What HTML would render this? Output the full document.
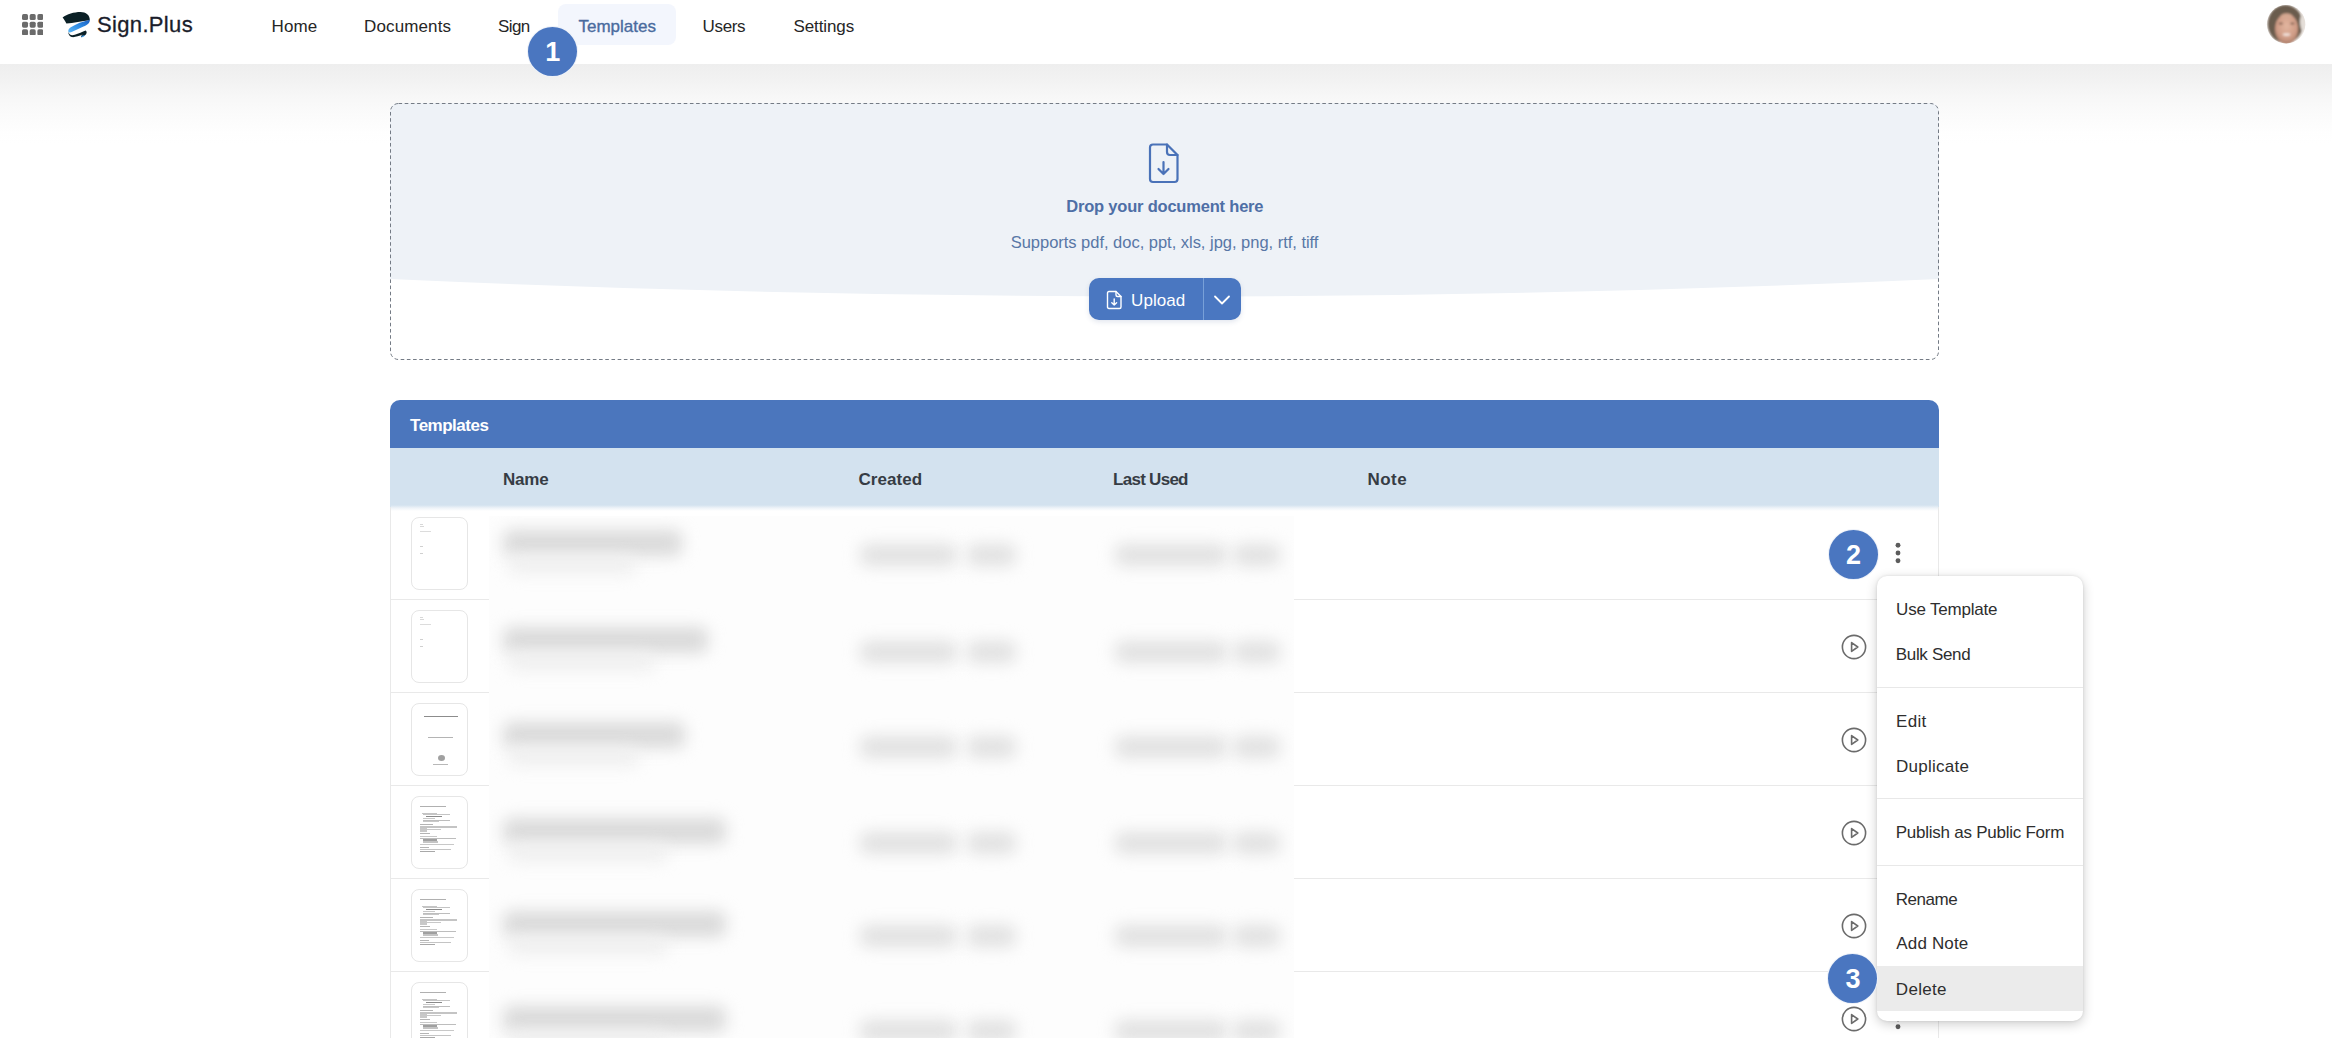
<!DOCTYPE html>
<html><head><meta charset="utf-8"><title>Sign.Plus Templates</title>
<style>*{box-sizing:border-box;margin:0;padding:0}
html,body{width:2332px;height:1038px;overflow:hidden;background:#fff;font-family:"Liberation Sans",sans-serif;color:#333}
.abs{position:absolute}
.tx{position:absolute;white-space:nowrap;line-height:24px}
.badge{position:absolute;border-radius:50%;background:#4a76c0;color:#fff;font-weight:bold;font-size:27px;text-align:center;border:1px solid rgba(255,255,255,0.9)}
.thumb{position:absolute;width:57px;height:73px;border:1px solid #e6e6e6;border-radius:8px;background:#fff;overflow:hidden}
.tl{position:absolute;background:#dadada}
.bl{position:absolute;filter:blur(7px);border-radius:8px}
.sep{position:absolute;left:0;width:206px;height:1px;background:#e8e8e8}
</style></head><body>
<div class="abs" style="left:0;top:0;width:2332px;height:64px;background:#fff"></div>
<div class="abs" style="left:0;top:64px;width:2332px;height:80px;background:linear-gradient(#eeeeee,#f2f2f2 20%,#f7f7f7 40%,#fbfbfb 62%,#fefefe 85%,#fff)"></div>
<svg class="abs" style="left:21.6px;top:14px" width="21.4" height="21.4" viewBox="0 0 22 22" fill="#6b6b6b">
<rect x="0" y="0" width="6.2" height="6.2" rx="1.7"/><rect x="7.9" y="0" width="6.2" height="6.2" rx="1.7"/><rect x="15.8" y="0" width="6.2" height="6.2" rx="1.7"/>
<rect x="0" y="7.9" width="6.2" height="6.2" rx="1.7"/><rect x="7.9" y="7.9" width="6.2" height="6.2" rx="1.7"/><rect x="15.8" y="7.9" width="6.2" height="6.2" rx="1.7"/>
<rect x="0" y="15.8" width="6.2" height="6.2" rx="1.7"/><rect x="7.9" y="15.8" width="6.2" height="6.2" rx="1.7"/><rect x="15.8" y="15.8" width="6.2" height="6.2" rx="1.7"/>
</svg>
<svg class="abs" style="left:62px;top:11px" width="30" height="28" viewBox="0 0 30 28">
<defs><linearGradient id="lg" x1="0" y1="1" x2="1" y2="0"><stop offset="0" stop-color="#5cb6f5"/><stop offset="0.5" stop-color="#2f8de6"/><stop offset="1" stop-color="#1c5fc0"/></linearGradient></defs>
<path d="M0.6 6.6 C5 3.3 12 1.1 18.5 1.1 C24 1.2 27.9 4 27.8 9.2 C20.5 10 11 11.8 4.4 12.6 C3.2 10.2 1.9 8.1 0.6 6.6 Z" fill="#0b2026"/>
<path d="M27.8 8.8 C27.9 12.3 25.5 14 21.5 15.6 L10.2 20.8 C8 21.8 6.6 21.6 6.3 20.4 C6.2 18.8 6.8 17.6 8.8 16.3 C14 13 21 10.4 27.8 8.8 Z" fill="url(#lg)"/>
<path d="M6.3 20.4 C6.8 23.6 9.2 24.8 12.8 23.8 C16.5 22.6 20.5 20.6 23.6 19.4 C25.3 20.4 25 22.8 22.8 24.4 L19.2 26.2 C18.6 25.2 19.5 24.6 20.5 23.6 C17 25 12.5 26.6 9.6 26 C7.4 25.3 6.2 23.2 6.3 20.4 Z" fill="#0b2026"/>
<path d="M19.2 26.2 C19.5 25 20.5 24.2 22.8 24.4 C22 25.5 20.5 26.2 19.2 26.2Z" fill="#3a9ae8"/>
</svg>
<div class="abs" style="left:558px;top:4px;width:118px;height:41px;border-radius:8px;background:#f3f6fd"></div>
<svg class="abs" style="left:2266px;top:4px" width="40" height="40" viewBox="0 0 40 40">
<defs><clipPath id="av"><circle cx="20.1" cy="20.3" r="19.2"/></clipPath>
<filter id="avb" x="-20%" y="-20%" width="140%" height="140%"><feGaussianBlur stdDeviation="0.9"/></filter>
<radialGradient id="skin" cx="0.5" cy="0.4" r="0.6"><stop offset="0" stop-color="#e2b59f"/><stop offset="0.7" stop-color="#cf9c86"/><stop offset="1" stop-color="#a87a66"/></radialGradient></defs>
<g clip-path="url(#av)"><rect width="40" height="40" fill="#efeae6"/>
<g filter="url(#avb)">
<ellipse cx="19.3" cy="20" rx="17.5" ry="19" fill="#6a5c4d"/>
<ellipse cx="37" cy="18" rx="3" ry="9" fill="#e4ded8"/>
<ellipse cx="20.6" cy="25" rx="11.6" ry="15.2" fill="url(#skin)"/>
<ellipse cx="14.8" cy="19.6" rx="2.3" ry="1.1" fill="#8a6656"/>
<ellipse cx="26.4" cy="19.6" rx="2.3" ry="1.1" fill="#8a6656"/>
<ellipse cx="20.5" cy="30.6" rx="3.9" ry="1.4" fill="#f2e2db"/>
<ellipse cx="20.5" cy="12" rx="6" ry="3" fill="#d6ab95" opacity="0.6"/>
</g></g></svg>

<svg class="abs" style="left:390px;top:103px" width="1549" height="257" viewBox="0 0 1549 257">
<defs><clipPath id="dz"><rect x="0" y="0" width="1549" height="257" rx="8.5"/></clipPath></defs>
<g clip-path="url(#dz)"><rect width="1549" height="257" fill="#fff"/><path d="M0 0 H1549 V176 Q774.5 211 0 176 Z" fill="#eef2f7"/></g>
<rect x="0.5" y="0.5" width="1548" height="256" rx="8" fill="none" stroke="#747b85" stroke-width="1" stroke-dasharray="3.6 2.6"/>
</svg>
<svg class="abs" style="left:1148px;top:142px" width="32" height="42" viewBox="0 0 32 42" fill="none" stroke="#4a72b8" stroke-width="2.2" stroke-linejoin="round" stroke-linecap="round">
<path d="M5 2.5 H19 L29.5 13 V37 Q29.5 40 26.5 40 H5 Q2 40 2 37 V5.5 Q2 2.5 5 2.5 Z"/><path d="M19 2.5 V10 Q19 13 22 13 H29.5"/><path d="M15.5 20 V32 M10.5 27 L15.5 32 L20.5 27"/></svg>
<div class="abs" style="left:1089px;top:278px;width:152px;height:42px;background:#4a77c1;border-radius:10px;box-shadow:0 2px 5px rgba(60,90,140,0.15)"></div>
<div class="abs" style="left:1203px;top:278px;width:1px;height:42px;background:#78a0d8"></div>
<svg class="abs" style="left:1106px;top:290px" width="17" height="20" viewBox="0 0 17 20" fill="none" stroke="#fff" stroke-width="1.4" stroke-linejoin="round" stroke-linecap="round"><path d="M3 1.5 H10 L15 6.5 V17 Q15 18.5 13.5 18.5 H3 Q1.5 18.5 1.5 17 V3 Q1.5 1.5 3 1.5Z"/><path d="M10 1.5 V5 Q10 6.5 11.5 6.5 H15"/><path d="M8.2 9 V15 M5.8 12.8 L8.2 15 L10.6 12.8"/></svg>
<svg class="abs" style="left:1213px;top:294px" width="18" height="12" viewBox="0 0 18 12" fill="none" stroke="#fff" stroke-width="1.8" stroke-linecap="round" stroke-linejoin="round"><path d="M2 2.5 L9 9.5 L16 2.5"/></svg>

<div class="abs" style="left:390px;top:400px;width:1549px;height:48px;background:#4b76bd;border-radius:10px 10px 0 0"></div>
<div class="abs" style="left:390px;top:448px;width:1549px;height:59px;background:#d3e2ef"></div>
<div class="abs" style="left:390px;top:507px;width:1549px;height:531px;background:#fff;border-left:1px solid #e9e9e9;border-right:1px solid #e9e9e9"></div>
<div class="abs" style="left:391px;top:505px;width:1547px;height:6px;background:linear-gradient(#d3e2ef,#eef3f8 50%,#fff)"></div>
<div class="abs" style="left:391px;top:599px;width:1547px;height:1px;background:#e9e9e9"></div>
<div class="thumb" style="left:411px;top:517px"><div class="abs" style="left:7.5px;top:6px;width:3px;height:1px;background:#d8d8d8"></div><div class="abs" style="left:7.5px;top:8px;width:4px;height:1px;background:#d8d8d8"></div><div class="abs" style="left:7.5px;top:13px;width:11px;height:1px;background:#dcdcdc"></div><div class="abs" style="left:7.5px;top:28px;width:3px;height:1px;background:#d0d0d0"></div><div class="abs" style="left:7.5px;top:35px;width:3px;height:1px;background:#d0d0d0"></div></div>
<div class="abs" style="left:391px;top:692px;width:1547px;height:1px;background:#e9e9e9"></div>
<div class="thumb" style="left:411px;top:610px"><div class="abs" style="left:7.5px;top:6px;width:3px;height:1px;background:#d8d8d8"></div><div class="abs" style="left:7.5px;top:8px;width:4px;height:1px;background:#d8d8d8"></div><div class="abs" style="left:7.5px;top:13px;width:11px;height:1px;background:#dcdcdc"></div><div class="abs" style="left:7.5px;top:28px;width:3px;height:1px;background:#d0d0d0"></div><div class="abs" style="left:7.5px;top:35px;width:3px;height:1px;background:#d0d0d0"></div></div>
<svg class="abs" style="left:1841px;top:633.5px" width="26" height="26" viewBox="0 0 26 26"><circle cx="13" cy="13" r="11.6" fill="none" stroke="#6b6b6b" stroke-width="1.6"/><path d="M10.6 8.6 L16.8 13 L10.6 17.4 Z" fill="none" stroke="#6b6b6b" stroke-width="1.6" stroke-linejoin="round"/></svg>
<div class="abs" style="left:391px;top:785px;width:1547px;height:1px;background:#e9e9e9"></div>
<div class="thumb" style="left:411px;top:703px"><div class="abs" style="left:12px;top:11.5px;width:34px;height:1.6px;background:#8c8c8c"></div><div class="abs" style="left:16px;top:33px;width:25px;height:1.2px;background:#b4b4b4"></div><div class="abs" style="left:25.5px;top:50.5px;width:7px;height:6px;border-radius:50%;background:#a0a0a0"></div><div class="abs" style="left:21px;top:59.5px;width:15px;height:1.2px;background:#b8b8b8"></div></div>
<svg class="abs" style="left:1841px;top:726.5px" width="26" height="26" viewBox="0 0 26 26"><circle cx="13" cy="13" r="11.6" fill="none" stroke="#6b6b6b" stroke-width="1.6"/><path d="M10.6 8.6 L16.8 13 L10.6 17.4 Z" fill="none" stroke="#6b6b6b" stroke-width="1.6" stroke-linejoin="round"/></svg>
<div class="abs" style="left:391px;top:878px;width:1547px;height:1px;background:#e9e9e9"></div>
<div class="thumb" style="left:411px;top:796px"><div class="abs" style="left:7.8px;top:9.3px;width:26.2px;height:1.2px;background:#b0b0b0"></div><div class="abs" style="left:10.2px;top:15.5px;width:14.4px;height:1.2px;background:#c4c4c4"></div><div class="abs" style="left:10.6px;top:17.3px;width:27.9px;height:1.2px;background:#c4c4c4"></div><div class="abs" style="left:14.3px;top:19.0px;width:15.7px;height:1.2px;background:#8a8a8a"></div><div class="abs" style="left:10.6px;top:21.2px;width:12.4px;height:1.2px;background:#c8c8c8"></div><div class="abs" style="left:10.6px;top:22.6px;width:27.9px;height:1.2px;background:#bdbdbd"></div><div class="abs" style="left:10.6px;top:23.7px;width:16.9px;height:1.2px;background:#c8c8c8"></div><div class="abs" style="left:8.0px;top:26.5px;width:13.0px;height:1.2px;background:#b4b4b4"></div><div class="abs" style="left:8.2px;top:29.4px;width:37.3px;height:1.2px;background:#c4c4c4"></div><div class="abs" style="left:8.2px;top:30.5px;width:7.3px;height:1.2px;background:#c8c8c8"></div><div class="abs" style="left:8.2px;top:32.3px;width:20.8px;height:1.2px;background:#c8c8c8"></div><div class="abs" style="left:8.2px;top:33.4px;width:6.8px;height:1.2px;background:#c8c8c8"></div><div class="abs" style="left:8.0px;top:36.2px;width:10.0px;height:1.2px;background:#b4b4b4"></div><div class="abs" style="left:8.2px;top:39.3px;width:16.8px;height:1.2px;background:#c8c8c8"></div><div class="abs" style="left:8.2px;top:40.5px;width:35.8px;height:1.2px;background:#bdbdbd"></div><div class="abs" style="left:10.6px;top:42.4px;width:14.0px;height:1.2px;background:#a0a0a0"></div><div class="abs" style="left:10.6px;top:43.5px;width:15.4px;height:1.2px;background:#c4c4c4"></div><div class="abs" style="left:10.6px;top:45.0px;width:15.4px;height:1.2px;background:#c4c4c4"></div><div class="abs" style="left:8.2px;top:46.7px;width:33.8px;height:1.2px;background:#c8c8c8"></div><div class="abs" style="left:8.0px;top:49.5px;width:8.5px;height:1.2px;background:#b4b4b4"></div><div class="abs" style="left:8.2px;top:52.0px;width:31.3px;height:1.2px;background:#c4c4c4"></div><div class="abs" style="left:8.2px;top:54.0px;width:15.3px;height:1.2px;background:#a8a8a8"></div></div>
<svg class="abs" style="left:1841px;top:819.5px" width="26" height="26" viewBox="0 0 26 26"><circle cx="13" cy="13" r="11.6" fill="none" stroke="#6b6b6b" stroke-width="1.6"/><path d="M10.6 8.6 L16.8 13 L10.6 17.4 Z" fill="none" stroke="#6b6b6b" stroke-width="1.6" stroke-linejoin="round"/></svg>
<div class="abs" style="left:391px;top:971px;width:1547px;height:1px;background:#e9e9e9"></div>
<div class="thumb" style="left:411px;top:889px"><div class="abs" style="left:7.8px;top:9.3px;width:26.2px;height:1.2px;background:#b0b0b0"></div><div class="abs" style="left:10.2px;top:15.5px;width:14.4px;height:1.2px;background:#c4c4c4"></div><div class="abs" style="left:10.6px;top:17.3px;width:27.9px;height:1.2px;background:#c4c4c4"></div><div class="abs" style="left:14.3px;top:19.0px;width:15.7px;height:1.2px;background:#8a8a8a"></div><div class="abs" style="left:10.6px;top:21.2px;width:12.4px;height:1.2px;background:#c8c8c8"></div><div class="abs" style="left:10.6px;top:22.6px;width:27.9px;height:1.2px;background:#bdbdbd"></div><div class="abs" style="left:10.6px;top:23.7px;width:16.9px;height:1.2px;background:#c8c8c8"></div><div class="abs" style="left:8.0px;top:26.5px;width:13.0px;height:1.2px;background:#b4b4b4"></div><div class="abs" style="left:8.2px;top:29.4px;width:37.3px;height:1.2px;background:#c4c4c4"></div><div class="abs" style="left:8.2px;top:30.5px;width:7.3px;height:1.2px;background:#c8c8c8"></div><div class="abs" style="left:8.2px;top:32.3px;width:20.8px;height:1.2px;background:#c8c8c8"></div><div class="abs" style="left:8.2px;top:33.4px;width:6.8px;height:1.2px;background:#c8c8c8"></div><div class="abs" style="left:8.0px;top:36.2px;width:10.0px;height:1.2px;background:#b4b4b4"></div><div class="abs" style="left:8.2px;top:39.3px;width:16.8px;height:1.2px;background:#c8c8c8"></div><div class="abs" style="left:8.2px;top:40.5px;width:35.8px;height:1.2px;background:#bdbdbd"></div><div class="abs" style="left:10.6px;top:42.4px;width:14.0px;height:1.2px;background:#a0a0a0"></div><div class="abs" style="left:10.6px;top:43.5px;width:15.4px;height:1.2px;background:#c4c4c4"></div><div class="abs" style="left:10.6px;top:45.0px;width:15.4px;height:1.2px;background:#c4c4c4"></div><div class="abs" style="left:8.2px;top:46.7px;width:33.8px;height:1.2px;background:#c8c8c8"></div><div class="abs" style="left:8.0px;top:49.5px;width:8.5px;height:1.2px;background:#b4b4b4"></div><div class="abs" style="left:8.2px;top:52.0px;width:31.3px;height:1.2px;background:#c4c4c4"></div><div class="abs" style="left:8.2px;top:54.0px;width:15.3px;height:1.2px;background:#a8a8a8"></div></div>
<svg class="abs" style="left:1841px;top:912.5px" width="26" height="26" viewBox="0 0 26 26"><circle cx="13" cy="13" r="11.6" fill="none" stroke="#6b6b6b" stroke-width="1.6"/><path d="M10.6 8.6 L16.8 13 L10.6 17.4 Z" fill="none" stroke="#6b6b6b" stroke-width="1.6" stroke-linejoin="round"/></svg>
<div class="abs" style="left:391px;top:1064px;width:1547px;height:1px;background:#e9e9e9"></div>
<div class="thumb" style="left:411px;top:982px"><div class="abs" style="left:7.8px;top:9.3px;width:26.2px;height:1.2px;background:#b0b0b0"></div><div class="abs" style="left:10.2px;top:15.5px;width:14.4px;height:1.2px;background:#c4c4c4"></div><div class="abs" style="left:10.6px;top:17.3px;width:27.9px;height:1.2px;background:#c4c4c4"></div><div class="abs" style="left:14.3px;top:19.0px;width:15.7px;height:1.2px;background:#8a8a8a"></div><div class="abs" style="left:10.6px;top:21.2px;width:12.4px;height:1.2px;background:#c8c8c8"></div><div class="abs" style="left:10.6px;top:22.6px;width:27.9px;height:1.2px;background:#bdbdbd"></div><div class="abs" style="left:10.6px;top:23.7px;width:16.9px;height:1.2px;background:#c8c8c8"></div><div class="abs" style="left:8.0px;top:26.5px;width:13.0px;height:1.2px;background:#b4b4b4"></div><div class="abs" style="left:8.2px;top:29.4px;width:37.3px;height:1.2px;background:#c4c4c4"></div><div class="abs" style="left:8.2px;top:30.5px;width:7.3px;height:1.2px;background:#c8c8c8"></div><div class="abs" style="left:8.2px;top:32.3px;width:20.8px;height:1.2px;background:#c8c8c8"></div><div class="abs" style="left:8.2px;top:33.4px;width:6.8px;height:1.2px;background:#c8c8c8"></div><div class="abs" style="left:8.0px;top:36.2px;width:10.0px;height:1.2px;background:#b4b4b4"></div><div class="abs" style="left:8.2px;top:39.3px;width:16.8px;height:1.2px;background:#c8c8c8"></div><div class="abs" style="left:8.2px;top:40.5px;width:35.8px;height:1.2px;background:#bdbdbd"></div><div class="abs" style="left:10.6px;top:42.4px;width:14.0px;height:1.2px;background:#a0a0a0"></div><div class="abs" style="left:10.6px;top:43.5px;width:15.4px;height:1.2px;background:#c4c4c4"></div><div class="abs" style="left:10.6px;top:45.0px;width:15.4px;height:1.2px;background:#c4c4c4"></div><div class="abs" style="left:8.2px;top:46.7px;width:33.8px;height:1.2px;background:#c8c8c8"></div><div class="abs" style="left:8.0px;top:49.5px;width:8.5px;height:1.2px;background:#b4b4b4"></div><div class="abs" style="left:8.2px;top:52.0px;width:31.3px;height:1.2px;background:#c4c4c4"></div><div class="abs" style="left:8.2px;top:54.0px;width:15.3px;height:1.2px;background:#a8a8a8"></div></div>
<svg class="abs" style="left:1841px;top:1005.5px" width="26" height="26" viewBox="0 0 26 26"><circle cx="13" cy="13" r="11.6" fill="none" stroke="#6b6b6b" stroke-width="1.6"/><path d="M10.6 8.6 L16.8 13 L10.6 17.4 Z" fill="none" stroke="#6b6b6b" stroke-width="1.6" stroke-linejoin="round"/></svg>
<div class="abs" style="left:391px;top:1157px;width:1547px;height:1px;background:#e9e9e9"></div>
<div class="thumb" style="left:411px;top:1075px"><div class="abs" style="left:7.8px;top:9.3px;width:26.2px;height:1.2px;background:#b0b0b0"></div><div class="abs" style="left:10.2px;top:15.5px;width:14.4px;height:1.2px;background:#c4c4c4"></div><div class="abs" style="left:10.6px;top:17.3px;width:27.9px;height:1.2px;background:#c4c4c4"></div><div class="abs" style="left:14.3px;top:19.0px;width:15.7px;height:1.2px;background:#8a8a8a"></div><div class="abs" style="left:10.6px;top:21.2px;width:12.4px;height:1.2px;background:#c8c8c8"></div><div class="abs" style="left:10.6px;top:22.6px;width:27.9px;height:1.2px;background:#bdbdbd"></div><div class="abs" style="left:10.6px;top:23.7px;width:16.9px;height:1.2px;background:#c8c8c8"></div><div class="abs" style="left:8.0px;top:26.5px;width:13.0px;height:1.2px;background:#b4b4b4"></div><div class="abs" style="left:8.2px;top:29.4px;width:37.3px;height:1.2px;background:#c4c4c4"></div><div class="abs" style="left:8.2px;top:30.5px;width:7.3px;height:1.2px;background:#c8c8c8"></div><div class="abs" style="left:8.2px;top:32.3px;width:20.8px;height:1.2px;background:#c8c8c8"></div><div class="abs" style="left:8.2px;top:33.4px;width:6.8px;height:1.2px;background:#c8c8c8"></div><div class="abs" style="left:8.0px;top:36.2px;width:10.0px;height:1.2px;background:#b4b4b4"></div><div class="abs" style="left:8.2px;top:39.3px;width:16.8px;height:1.2px;background:#c8c8c8"></div><div class="abs" style="left:8.2px;top:40.5px;width:35.8px;height:1.2px;background:#bdbdbd"></div><div class="abs" style="left:10.6px;top:42.4px;width:14.0px;height:1.2px;background:#a0a0a0"></div><div class="abs" style="left:10.6px;top:43.5px;width:15.4px;height:1.2px;background:#c4c4c4"></div><div class="abs" style="left:10.6px;top:45.0px;width:15.4px;height:1.2px;background:#c4c4c4"></div><div class="abs" style="left:8.2px;top:46.7px;width:33.8px;height:1.2px;background:#c8c8c8"></div><div class="abs" style="left:8.0px;top:49.5px;width:8.5px;height:1.2px;background:#b4b4b4"></div><div class="abs" style="left:8.2px;top:52.0px;width:31.3px;height:1.2px;background:#c4c4c4"></div><div class="abs" style="left:8.2px;top:54.0px;width:15.3px;height:1.2px;background:#a8a8a8"></div></div>
<svg class="abs" style="left:1841px;top:1098.5px" width="26" height="26" viewBox="0 0 26 26"><circle cx="13" cy="13" r="11.6" fill="none" stroke="#6b6b6b" stroke-width="1.6"/><path d="M10.6 8.6 L16.8 13 L10.6 17.4 Z" fill="none" stroke="#6b6b6b" stroke-width="1.6" stroke-linejoin="round"/></svg>
<div class="abs" style="left:489px;top:516px;width:805px;height:522px;background:#fdfdfd;overflow:hidden">
<div class="bl" style="left:14px;top:14.4px;width:179px;height:26px;background:#dadada;filter:blur(8px)"></div>
<div class="bl" style="left:19px;top:40.4px;width:128px;height:18px;background:#efefef;filter:blur(8px)"></div>
<div class="bl" style="left:371px;top:28.0px;width:97px;height:22px;background:#e1e1e1;filter:blur(8px)"></div>
<div class="bl" style="left:478px;top:28.0px;width:49px;height:22px;background:#e1e1e1;filter:blur(8px)"></div>
<div class="bl" style="left:626px;top:28.0px;width:112px;height:22px;background:#e1e1e1;filter:blur(8px)"></div>
<div class="bl" style="left:744px;top:28.0px;width:47px;height:22px;background:#e1e1e1;filter:blur(8px)"></div>
<div class="bl" style="left:14px;top:111.0px;width:205px;height:26px;background:#dadada;filter:blur(8px)"></div>
<div class="bl" style="left:19px;top:137.0px;width:147px;height:18px;background:#efefef;filter:blur(8px)"></div>
<div class="bl" style="left:371px;top:124.6px;width:97px;height:22px;background:#e1e1e1;filter:blur(8px)"></div>
<div class="bl" style="left:478px;top:124.6px;width:49px;height:22px;background:#e1e1e1;filter:blur(8px)"></div>
<div class="bl" style="left:626px;top:124.6px;width:112px;height:22px;background:#e1e1e1;filter:blur(8px)"></div>
<div class="bl" style="left:744px;top:124.6px;width:47px;height:22px;background:#e1e1e1;filter:blur(8px)"></div>
<div class="bl" style="left:14px;top:206.0px;width:182px;height:26px;background:#dadada;filter:blur(8px)"></div>
<div class="bl" style="left:19px;top:232.0px;width:131px;height:18px;background:#efefef;filter:blur(8px)"></div>
<div class="bl" style="left:371px;top:219.6px;width:97px;height:22px;background:#e1e1e1;filter:blur(8px)"></div>
<div class="bl" style="left:478px;top:219.6px;width:49px;height:22px;background:#e1e1e1;filter:blur(8px)"></div>
<div class="bl" style="left:626px;top:219.6px;width:112px;height:22px;background:#e1e1e1;filter:blur(8px)"></div>
<div class="bl" style="left:744px;top:219.6px;width:47px;height:22px;background:#e1e1e1;filter:blur(8px)"></div>
<div class="bl" style="left:14px;top:302.0px;width:223px;height:26px;background:#dadada;filter:blur(8px)"></div>
<div class="bl" style="left:19px;top:328.0px;width:160px;height:18px;background:#efefef;filter:blur(8px)"></div>
<div class="bl" style="left:371px;top:315.5px;width:97px;height:22px;background:#e1e1e1;filter:blur(8px)"></div>
<div class="bl" style="left:478px;top:315.5px;width:49px;height:22px;background:#e1e1e1;filter:blur(8px)"></div>
<div class="bl" style="left:626px;top:315.5px;width:112px;height:22px;background:#e1e1e1;filter:blur(8px)"></div>
<div class="bl" style="left:744px;top:315.5px;width:47px;height:22px;background:#e1e1e1;filter:blur(8px)"></div>
<div class="bl" style="left:14px;top:395.0px;width:223px;height:26px;background:#dadada;filter:blur(8px)"></div>
<div class="bl" style="left:19px;top:421.0px;width:160px;height:18px;background:#efefef;filter:blur(8px)"></div>
<div class="bl" style="left:371px;top:408.7px;width:97px;height:22px;background:#e1e1e1;filter:blur(8px)"></div>
<div class="bl" style="left:478px;top:408.7px;width:49px;height:22px;background:#e1e1e1;filter:blur(8px)"></div>
<div class="bl" style="left:626px;top:408.7px;width:112px;height:22px;background:#e1e1e1;filter:blur(8px)"></div>
<div class="bl" style="left:744px;top:408.7px;width:47px;height:22px;background:#e1e1e1;filter:blur(8px)"></div>
<div class="bl" style="left:14px;top:490.0px;width:223px;height:26px;background:#dadada;filter:blur(8px)"></div>
<div class="bl" style="left:19px;top:516.0px;width:160px;height:18px;background:#efefef;filter:blur(8px)"></div>
<div class="bl" style="left:371px;top:504.0px;width:97px;height:22px;background:#e1e1e1;filter:blur(8px)"></div>
<div class="bl" style="left:478px;top:504.0px;width:49px;height:22px;background:#e1e1e1;filter:blur(8px)"></div>
<div class="bl" style="left:626px;top:504.0px;width:112px;height:22px;background:#e1e1e1;filter:blur(8px)"></div>
<div class="bl" style="left:744px;top:504.0px;width:47px;height:22px;background:#e1e1e1;filter:blur(8px)"></div>
<div class="bl" style="left:14px;top:581.0px;width:223px;height:26px;background:#dadada;filter:blur(8px)"></div>
<div class="bl" style="left:19px;top:607.0px;width:160px;height:18px;background:#efefef;filter:blur(8px)"></div>
<div class="bl" style="left:371px;top:594.0px;width:97px;height:22px;background:#e1e1e1;filter:blur(8px)"></div>
<div class="bl" style="left:478px;top:594.0px;width:49px;height:22px;background:#e1e1e1;filter:blur(8px)"></div>
<div class="bl" style="left:626px;top:594.0px;width:112px;height:22px;background:#e1e1e1;filter:blur(8px)"></div>
<div class="bl" style="left:744px;top:594.0px;width:47px;height:22px;background:#e1e1e1;filter:blur(8px)"></div>
</div>
<svg class="abs" style="left:1893.4px;top:541.3px" width="10" height="24" viewBox="0 0 10 24" fill="#5c5c5c"><circle cx="5" cy="4.2" r="2.45"/><circle cx="5" cy="12" r="2.45"/><circle cx="5" cy="19.8" r="2.45"/></svg>
<svg class="abs" style="left:1893px;top:1006.5px" width="10" height="24" viewBox="0 0 10 24" fill="#5c5c5c"><circle cx="5" cy="4.2" r="2.45"/><circle cx="5" cy="12" r="2.45"/><circle cx="5" cy="19.8" r="2.45"/></svg>
<div id="menu" class="abs" style="left:1877px;top:576px;width:206px;height:445px;background:#fff;border-radius:10px;box-shadow:0 3px 12px rgba(0,0,0,0.2),0 0 3px rgba(0,0,0,0.1);overflow:hidden">
<div class="sep" style="top:111px"></div>
<div class="sep" style="top:222px"></div>
<div class="sep" style="top:289px"></div>
<div class="abs" style="left:0;top:390px;width:206px;height:45px;background:#ebebeb"></div>
</div>
<div id="t_logo" class="tx" style="left:97.00px;top:12.74px;font-size:22px;font-weight:400;color:#1a1d2b;letter-spacing:0.338px;-webkit-text-stroke:0.3px #1a1d2b;">Sign.Plus</div>
<div id="t_home" class="tx" style="left:271.50px;top:14.63px;font-size:17px;font-weight:400;color:#262626;letter-spacing:0.120px;">Home</div>
<div id="t_docs" class="tx" style="left:364.00px;top:14.89px;font-size:17px;font-weight:400;color:#262626;letter-spacing:0.135px;">Documents</div>
<div id="t_sign" class="tx" style="left:498.00px;top:14.89px;font-size:17px;font-weight:400;color:#262626;letter-spacing:-0.600px;">Sign</div>
<div id="t_tmpl" class="tx" style="left:578.50px;top:14.89px;font-size:17px;font-weight:400;color:#4a6b9e;letter-spacing:0.000px;-webkit-text-stroke:0.35px #4a6b9e;">Templates</div>
<div id="t_users" class="tx" style="left:702.50px;top:14.89px;font-size:17px;font-weight:400;color:#262626;letter-spacing:-0.317px;">Users</div>
<div id="t_sett" class="tx" style="left:793.50px;top:14.89px;font-size:17px;font-weight:400;color:#262626;letter-spacing:-0.102px;">Settings</div>
<div id="t_drop" class="tx" style="left:1066.20px;top:193.54px;font-size:16.5px;font-weight:700;color:#4e6fa6;letter-spacing:-0.198px;">Drop your document here</div>
<div id="t_supp" class="tx" style="left:1010.70px;top:229.64px;font-size:16.5px;font-weight:400;color:#5877a6;letter-spacing:-0.022px;">Supports pdf, doc, ppt, xls, jpg, png, rtf, tiff</div>
<div id="t_upl" class="tx" style="left:1131.10px;top:288.97px;font-size:17px;font-weight:400;color:#ffffff;letter-spacing:0.072px;">Upload</div>
<div id="t_ttl" class="tx" style="left:410.00px;top:414.21px;font-size:17px;font-weight:700;color:#ffffff;letter-spacing:-0.495px;">Templates</div>
<div id="t_name" class="tx" style="left:503.00px;top:467.97px;font-size:17px;font-weight:700;color:#363c44;letter-spacing:-0.240px;">Name</div>
<div id="t_crea" class="tx" style="left:858.50px;top:468.39px;font-size:17px;font-weight:700;color:#363c44;letter-spacing:0.060px;">Created</div>
<div id="t_last" class="tx" style="left:1113.00px;top:468.39px;font-size:17px;font-weight:700;color:#363c44;letter-spacing:-0.719px;">Last Used</div>
<div id="t_note" class="tx" style="left:1367.50px;top:468.39px;font-size:17px;font-weight:700;color:#363c44;letter-spacing:0.480px;">Note</div>
<div id="m_use" class="tx" style="left:1896.10px;top:597.85px;font-size:17px;font-weight:400;color:#2e2e2e;letter-spacing:-0.210px;">Use Template</div>
<div id="m_bulk" class="tx" style="left:1895.80px;top:643.49px;font-size:17px;font-weight:400;color:#2e2e2e;letter-spacing:-0.337px;">Bulk Send</div>
<div id="m_edit" class="tx" style="left:1896.00px;top:710.11px;font-size:17px;font-weight:400;color:#2e2e2e;letter-spacing:0.300px;">Edit</div>
<div id="m_dup" class="tx" style="left:1896.00px;top:754.63px;font-size:17px;font-weight:400;color:#2e2e2e;letter-spacing:0.249px;">Duplicate</div>
<div id="m_pub" class="tx" style="left:1895.70px;top:821.11px;font-size:17px;font-weight:400;color:#2e2e2e;letter-spacing:-0.246px;">Publish as Public Form</div>
<div id="m_ren" class="tx" style="left:1895.80px;top:887.59px;font-size:17px;font-weight:400;color:#2e2e2e;letter-spacing:-0.468px;">Rename</div>
<div id="m_add" class="tx" style="left:1896.30px;top:932.35px;font-size:17px;font-weight:400;color:#2e2e2e;letter-spacing:0.155px;">Add Note</div>
<div id="m_del" class="tx" style="left:1895.80px;top:977.63px;font-size:17px;font-weight:400;color:#2e2e2e;letter-spacing:0.324px;">Delete</div>
<div class="badge" style="left:527.3px;top:25.5px;width:51px;height:51px;line-height:50px">1</div>
<div class="badge" style="left:1828.1px;top:529.1px;width:51px;height:51px;line-height:50px">2</div>
<div class="badge" style="left:1827.4px;top:953.1px;width:51px;height:51px;line-height:50px">3</div>
</body></html>
